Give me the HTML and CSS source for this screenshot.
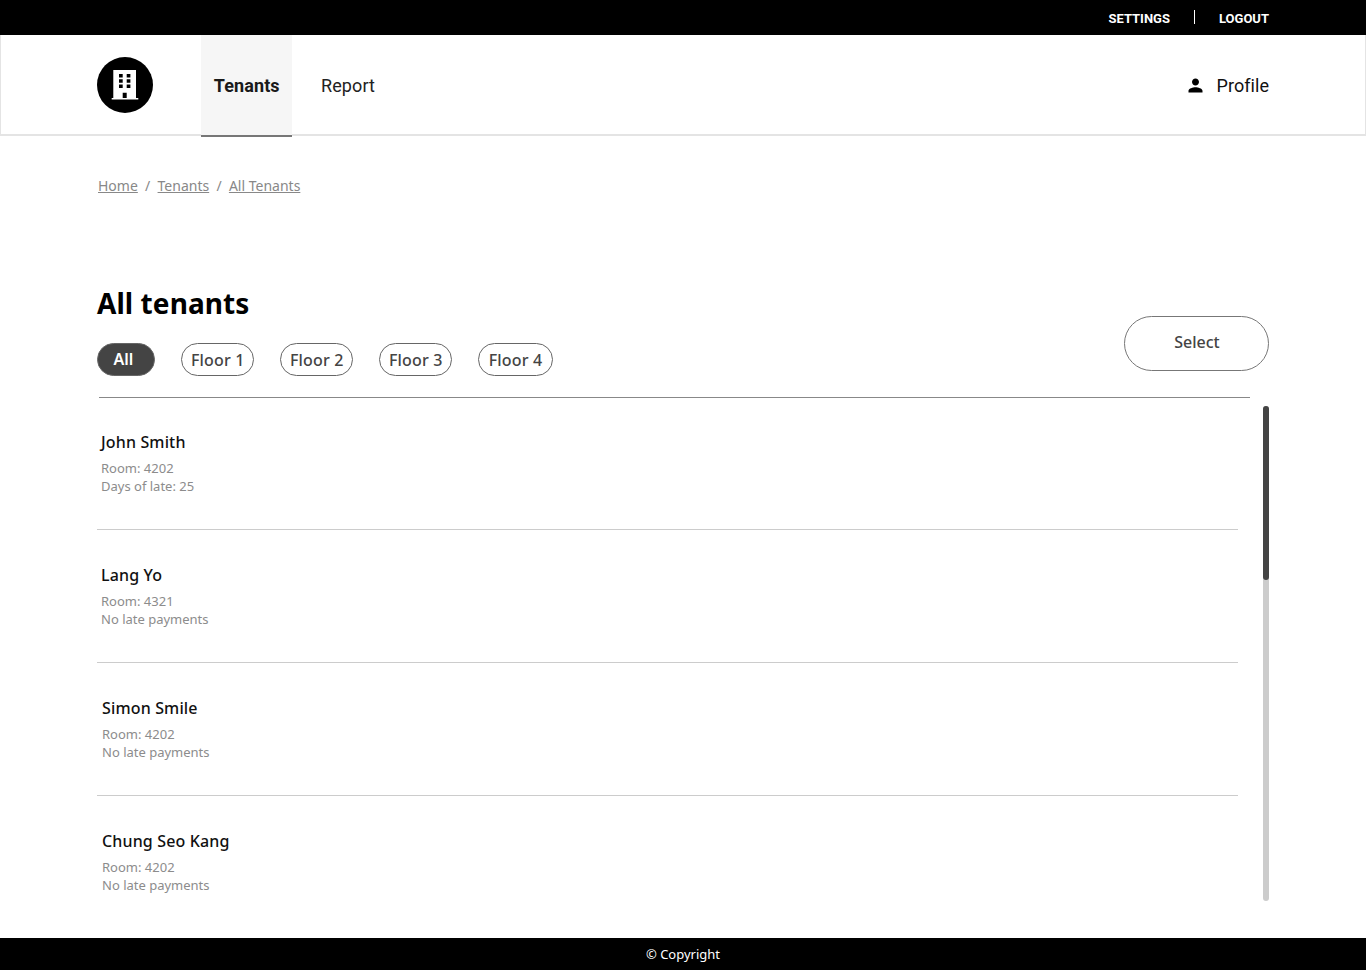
FILE: index.html
```html
<!DOCTYPE html>
<html lang="en">
<head>
<meta charset="utf-8">
<title>All tenants</title>
<link rel="stylesheet" href="styles.css">
</head>
<body>
<div class="topbar">
  <a class="top-link" href="#">SETTINGS</a>
  <span class="top-sep"></span>
  <a class="top-link" href="#">LOGOUT</a>
</div>
<header class="header">
  <div class="logo">
    <svg viewBox="0 0 56 56" width="56" height="56" aria-hidden="true">
      <circle cx="28" cy="28" r="28" fill="#000"/>
      <path fill="#fff" fill-rule="evenodd" d="M16.300 13H39v28h2.300v1.500H14.700V41h1.600zM22 17v3.500h3.700V17zM29.700 17v3.500h3.700V17zM22 22.300v3.500h3.700v-3.500zM29.700 22.300v3.500h3.700v-3.500zM22 27.600v3.500h3.700v-3.500zM29.700 27.600v3.500h3.700v-3.500zM25.700 35.700V41h4v-5.300z"/>
    </svg>
  </div>
  <nav class="nav">
    <a class="nav-item nav-item-active" href="#">Tenants</a>
    <a class="nav-item" href="#">Report</a>
  </nav>
  <a class="profile" href="#">
    <svg viewBox="0 0 24 24" width="21" height="21" aria-hidden="true"><path fill="#000" d="M12 12c2.210 0 4-1.790 4-4s-1.790-4-4-4-4 1.790-4 4 1.790 4 4 4zm0 2c-2.670 0-8 1.340-8 4v2h16v-2c0-2.660-5.330-4-8-4z"/></svg>
    <span>Profile</span>
  </a>
</header>
<main class="main">
  <div class="crumbs">
    <a href="#">Home</a><span class="crumb-sep">/</span><a href="#">Tenants</a><span class="crumb-sep">/</span><a href="#">All Tenants</a>
  </div>
  <h1 class="title">All tenants</h1>
  <div class="toolbar">
    <div class="chips">
      <button class="chip chip-active">All</button>
      <button class="chip">Floor 1</button>
      <button class="chip">Floor 2</button>
      <button class="chip">Floor 3</button>
      <button class="chip chip-wide">Floor 4</button>
    </div>
    <button class="select-btn">Select</button>
  </div>
  <div class="rule"></div>
  <div class="list-wrap">
    <div class="list">
      <div class="row">
        <div class="name">John Smith</div>
        <div class="detail">Room: 4202</div>
        <div class="detail">Days of late: 25</div>
      </div>
      <div class="row">
        <div class="name">Lang Yo</div>
        <div class="detail">Room: 4321</div>
        <div class="detail">No late payments</div>
      </div>
      <div class="row row-shift">
        <div class="name">Simon Smile</div>
        <div class="detail">Room: 4202</div>
        <div class="detail">No late payments</div>
      </div>
      <div class="row row-shift">
        <div class="name">Chung Seo Kang</div>
        <div class="detail">Room: 4202</div>
        <div class="detail">No late payments</div>
      </div>
    </div>
    <div class="scroll-track"><div class="scroll-thumb"></div></div>
  </div>
</main>
<footer class="footer">© Copyright</footer>
</body>
</html>
```
FILE: styles.css
```css
* { box-sizing: border-box; }
html, body { margin: 0; padding: 0; }
body {
  height: 970px;
  overflow: hidden;
  display: flex;
  flex-direction: column;
  background: #fff;
  color: #000;
  font-family: "Noto Sans", "Open Sans", sans-serif;
}
a { text-decoration: none; color: inherit; }
button { font-family: inherit; background: #fff; cursor: pointer; }

.topbar {
  height: 35px;
  flex: none;
  background: #000;
  display: flex;
  align-items: center;
  justify-content: flex-end;
  padding: 1px 97px 0 0;
}
.top-link {
  font-family: Roboto, sans-serif;
  font-weight: 700;
  font-size: 13px;
  color: #fff;
}
.top-sep {
  width: 1px;
  height: 14px;
  margin: -2px 24px 0;
  background: #fff;
}

.header {
  height: 101px;
  flex: none;
  display: flex;
  align-items: center;
  padding: 0 96px;
  border: 1px solid #e4e4e4;
  border-top: 0;
  border-bottom-width: 2px;
  font-family: Roboto, sans-serif;
}
.logo { width: 56px; height: 56px; flex: none; margin-top: 1px; }
.logo svg { display: block; }
.nav {
  display: flex;
  align-self: stretch;
  margin-left: 48px;
  margin-bottom: -3px;
}
.nav-item {
  width: 90.500px;
  display: flex;
  align-items: center;
  justify-content: center;
  padding-bottom: 2px;
  font-size: 18px;
  letter-spacing: 0.1px;
  color: #222;
}
.nav-item + .nav-item { width: auto; padding-left: 29.500px; }
.nav-item-active {
  font-weight: 700;
  background: #f6f6f6;
  color: #1a1a1a;
  padding: 0 0 0 1px;
  border-bottom: 2px solid #777;
}
.profile {
  margin-left: auto;
  display: flex;
  align-items: center;
  gap: 10.500px;
  font-size: 18px;
  letter-spacing: 0.05px;
  color: #111;
  margin-top: 1px;
}
.profile svg { display: block; }

.main {
  flex: 1;
  min-height: 0;
  padding: 0 97px;
}
.crumbs {
  margin: 40px 0 0 1px;
  font-size: 14px;
  line-height: 20px;
  color: #888;
}
.crumbs a { text-decoration: underline; }
.crumb-sep { margin: 0 7.250px; }

.title {
  margin: 87px 0 0;
  font-size: 28px;
  line-height: 40px;
  font-weight: 700;
  letter-spacing: 0.07px;
}
.toolbar {
  display: flex;
  align-items: flex-start;
  justify-content: space-between;
  margin-top: 1px;
}
.chips {
  display: flex;
  gap: 26px;
  margin-top: 19px;
}
.chip {
  height: 33px;
  padding: 0 9px;
  border: 1px solid #666;
  border-radius: 17px;
  font-size: 16px;
  font-weight: 500;
  letter-spacing: 0.15px;
  color: #444;
  width: 73px;
  white-space: nowrap;
}
.chip-wide { width: 75px; }
.chip-active {
  width: 58px;
  background: #444;
  color: #fff;
  font-weight: 600;
  letter-spacing: 0;
  padding: 0 5px 1px 0;
}
.select-btn {
  width: 145px;
  height: 55px;
  margin-top: -8px;
  padding: 0 0 3px 1px;
  border: 1px solid #777;
  border-radius: 28px;
  font-size: 16px;
  font-weight: 500;
  color: #444;
}
.rule {
  height: 1px;
  margin: 21px 19px 0 2px;
  background: #888;
}
.list-wrap {
  display: flex;
  justify-content: space-between;
  margin-top: 8px;
  height: 495px;
}
.list { width: 1141px; }
.row {
  height: 133px;
  padding: 33px 0 0 4px;
  border-bottom: 1px solid #ccc;
}
.row:first-child { height: 124px; padding-top: 24px; }
.row:last-child { border-bottom: 0; }
.row-shift { padding-left: 5px; }
.name {
  font-size: 16px;
  line-height: 24px;
  font-weight: 500;
  letter-spacing: 0.15px;
  color: #111;
  margin-bottom: 5px;
}
.detail {
  font-size: 13px;
  line-height: 18px;
  color: #8c8c8c;
}
.scroll-track {
  width: 6px;
  background: #ccc;
  border-radius: 3px;
}
.scroll-thumb {
  height: 174px;
  background: #444;
  border-radius: 3px;
}

.footer {
  height: 32px;
  flex: none;
  background: #000;
  color: #fff;
  font-size: 13px;
  display: flex;
  align-items: center;
  justify-content: center;
}
```
